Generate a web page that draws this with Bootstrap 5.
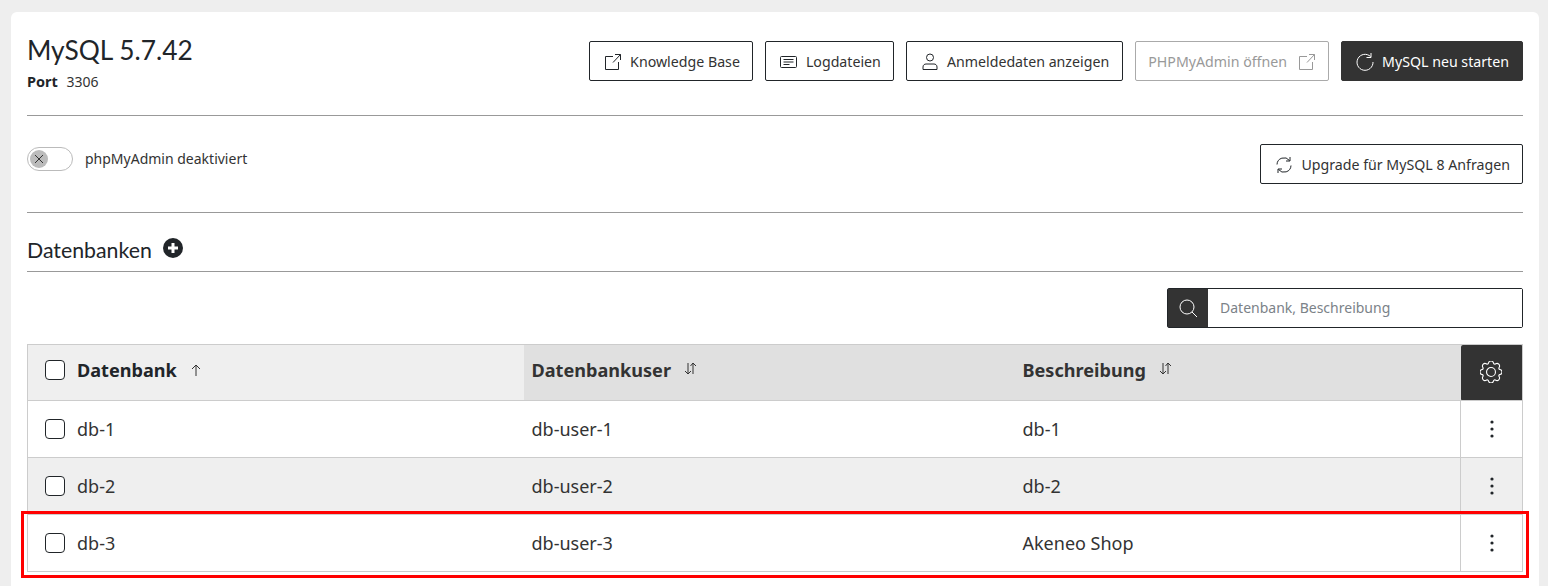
<!DOCTYPE html>
<html lang="de">
<head>
<meta charset="utf-8">
<title>MySQL</title>
<link href="https://cdn.jsdelivr.net/npm/bootstrap@5.3.0/dist/css/bootstrap.min.css" rel="stylesheet">
<style>
html,body{height:586px;overflow:hidden}
body{background:#eee;font-family:"Noto Sans",sans-serif;color:#212529;font-size:14px}
.panel-box{position:relative;margin:12px 9px 0 11px;background:#fff;border-radius:6px;padding:16px;height:700px}
.title-main{font-family:Lato,sans-serif;font-size:26.3px;font-weight:400;line-height:32px;margin:6px 0 0;color:#212529}
.port-line{font-size:14px;line-height:20px;margin-top:5px;color:#333}
.port-line b{margin-right:5px;font-size:14.5px;color:#212529}
.head-row{height:88px;border-bottom:1px solid #999}
.tool-btn{height:40px;border:1px solid #212529;border-radius:2px;background:#fff;color:#333;font-size:14.2px;padding:1px 12px 0 14px;display:flex;align-items:center;gap:8px;white-space:nowrap}
.tool-btn svg{flex:none}
.tool-btn.off{border-color:#aaa;color:#999;padding:1px 12px 0;gap:11px}
.tool-btn.dark{background:#333;border-color:#333;color:#fff;padding-right:13px}
.tool-btn.wide-pad{padding-right:13px}
.head-tools{gap:12px;padding-top:13px}
.switch-row{height:97px;border-bottom:1px solid #999}
.switch-wrap{padding-top:31px}
.upgrade-wrap{padding-top:28px}
.fake-switch{width:46px;height:24px;border:1px solid #bbb;border-radius:12px;display:flex;align-items:center;padding-left:2px}
.fake-thumb{width:18px;height:18px;border-radius:50%;background:#bbb;display:flex;align-items:center;justify-content:center}
.switch-label{font-size:14px;margin:1px 0 0 12px;color:#333}
.sec-title{font-family:Lato,sans-serif;font-weight:400;font-size:21.3px;line-height:28px;margin:0}
.sec-row{height:59px;border-bottom:1px solid #999;padding-bottom:7px;gap:11px}
.sec-plus{margin-bottom:6px}
.find-box{width:356px;height:40px;border:1px solid #212529;border-radius:2px;margin:16px 0 16px auto}
.find-icon{width:40px;background:#333;display:flex;align-items:center;justify-content:center}
.find-box input{border:0;outline:0;flex:1;padding:0 12px 2px;font-size:14px;font-family:"Noto Sans",sans-serif;color:#6c757d;min-width:0}
.find-box input::placeholder{color:#7b8288}
.data-grid{table-layout:fixed;width:1495px;margin:0;border-collapse:collapse;border:1px solid #ccc;font-size:18px}
.data-grid th,.data-grid td{padding:0;vertical-align:middle;border:0;color:#333}
.data-grid thead tr{height:56px;background:#e0e0e0}
.data-grid thead tr,.data-grid tbody tr{border-bottom:1px solid #ccc}
.data-grid tbody tr{height:57px}
.data-grid th{font-weight:700;font-size:18.1px;color:#333;padding-bottom:4px}
.data-grid th.sorted{background:#efefef;color:#212529}
.data-grid tr.alt-row td{background:#efefef}
.data-grid .cell-name{padding-left:17px}
.data-grid .cell-name>div{display:flex;align-items:center;gap:12px}
.data-grid .cell-user{padding-left:8px}
.data-grid .cell-desc{padding-left:7px}
.data-grid .cell-act{border-left:1px solid #ccc;text-align:center}
.data-grid th.cell-act{background:#333;border-radius:2px;border-left:0;padding-bottom:3px}
.kebab-ico{display:block;margin:0 auto}
.tick-box{width:20px;height:20px;border:1px solid #212529;border-radius:4px;background:#fff;margin:0;flex:none;appearance:none;display:block}
.sort-ico{margin-left:1px;vertical-align:2px}
.sort-gap{margin-left:13px}
.note-frame{position:absolute;left:10px;top:499px;width:1508px;height:67px;border:3px solid #f00;pointer-events:none}
</style>
</head>
<body>
<div class="panel-box">
  <div class="d-flex justify-content-between head-row">
    <div>
      <h1 class="title-main">MySQL 5.7.42</h1>
      <div class="port-line"><b>Port</b> 3306</div>
    </div>
    <div class="d-flex head-tools align-items-start">
      <button class="tool-btn" type="button">
        <svg width="18" height="18" viewBox="0 0 18 18" fill="none" stroke="#212529" stroke-width="1"><path d="M9 3.500H1.500v13h13V9M9 9.500 16.500 1.500M11 1.500h5.500V7"/></svg>Knowledge Base</button>
      <button class="tool-btn" type="button">
        <svg width="18" height="14" viewBox="0 0 18 14" fill="none" stroke="#212529"><rect x=".5" y="1.5" width="16" height="11" rx="1"/><path d="M3.500 4.500h10M3.500 7h10M3.500 9.500h6"/></svg>Logdateien</button>
      <button class="tool-btn wide-pad" type="button">
        <svg width="18" height="18" viewBox="0 0 18 18" fill="none" stroke="#212529"><circle cx="9" cy="4.500" r="3.500"/><path d="M2 16.500v-2.500c0-2 1.500-3 3-3h8c1.500 0 3 1 3 3v2.500z"/></svg>Anmeldedaten anzeigen</button>
      <button class="tool-btn off" type="button">PHPMyAdmin öffnen
        <svg width="18" height="18" viewBox="0 0 18 18" fill="none" stroke="#999" stroke-width="1"><path d="M9 3.500H1.500v13h13V9M9 9.500 16.500 1.500M11 1.500h5.500V7"/></svg></button>
      <button class="tool-btn dark" type="button">
        <svg width="18" height="18" viewBox="0 0 18 18" fill="none" stroke="#fff"><path d="M14.500 3.500A8 8 0 1 0 17 9"/><path d="M10.500 4.500h4.500V0"/></svg>MySQL neu starten</button>
    </div>
  </div>
  <div class="d-flex justify-content-between switch-row">
    <div class="d-flex align-items-start switch-wrap">
      <div class="fake-switch"><div class="fake-thumb"><svg width="10" height="10" viewBox="0 0 10 10" stroke="#333" fill="none"><path d="M1 1l8 8M9 1l-8 8"/></svg></div></div>
      <span class="switch-label">phpMyAdmin deaktiviert</span>
    </div>
    <div class="upgrade-wrap">
      <button class="tool-btn" type="button">
        <svg width="18" height="18" viewBox="0 0 18 18" fill="none" stroke="#212529"><path d="M2 8.500A7 7 0 0 1 14.500 4.500M16 9.500A7 7 0 0 1 3.500 13.500"/><path d="M11 5h4V1M7 13H3v4"/></svg>Upgrade für MySQL 8 Anfragen</button>
    </div>
  </div>
  <div class="d-flex align-items-end sec-row">
    <h2 class="sec-title">Datenbanken</h2>
    <svg class="sec-plus" width="20" height="20" viewBox="0 0 20 20"><circle cx="10" cy="10" r="10" fill="#212529"/><path d="M10 5v10M5 10h10" stroke="#fff" stroke-width="3"/></svg>
  </div>
  <div class="d-flex find-box">
    <span class="find-icon"><svg width="20" height="20" viewBox="0 0 20 20" fill="none" stroke="#fff"><circle cx="9" cy="9" r="7"/><path d="M14 14l5 5"/></svg></span>
    <input type="text" placeholder="Datenbank, Beschreibung">
  </div>
  <table class="table data-grid">
    <colgroup><col style="width:496px"><col style="width:492px"><col style="width:445px"><col style="width:62px"></colgroup>
    <thead><tr>
      <th class="cell-name sorted"><div><input class="tick-box" type="checkbox"><span>Datenbank</span>
        <svg class="sort-ico" width="12" height="12" viewBox="0 0 12 12" fill="none" stroke="#333"><path d="M6 12V1M2 5l4-4 4 4"/></svg></div></th>
      <th class="cell-user">Datenbankuser<svg class="sort-ico sort-gap" width="13" height="13" viewBox="0 0 13 13" fill="none" stroke="#333"><path d="M4 1v11M1 9l3 3 3-3M9 12V1M6.500 4 9 1l3 3"/></svg></th>
      <th class="cell-desc">Beschreibung<svg class="sort-ico sort-gap" width="13" height="13" viewBox="0 0 13 13" fill="none" stroke="#333"><path d="M4 1v11M1 9l3 3 3-3M9 12V1M6.500 4 9 1l3 3"/></svg></th>
      <th class="cell-act"><svg width="22" height="22" viewBox="0 0 16 16" fill="none" stroke="#fff" stroke-width=".8"><path d="M8 4.754a3.246 3.246 0 1 0 0 6.492 3.246 3.246 0 0 0 0-6.492z"/><path d="M9.796 1.343c-.527-1.790-3.065-1.790-3.592 0l-.094.319a.873.873 0 0 1-1.255.52l-.292-.16c-1.640-.892-3.433.902-2.540 2.541l.159.292a.873.873 0 0 1-.52 1.255l-.319.094c-1.790.527-1.790 3.065 0 3.592l.319.094a.873.873 0 0 1 .52 1.255l-.16.292c-.892 1.640.901 3.434 2.541 2.540l.292-.159a.873.873 0 0 1 1.255.52l.094.319c.527 1.790 3.065 1.790 3.592 0l.094-.319a.873.873 0 0 1 1.255-.52l.292.16c1.640.893 3.434-.902 2.540-2.541l-.159-.292a.873.873 0 0 1 .52-1.255l.319-.094c1.790-.527 1.790-3.065 0-3.592l-.319-.094a.873.873 0 0 1-.52-1.255l.16-.292c.893-1.640-.902-3.433-2.541-2.540l-.292.159a.873.873 0 0 1-1.255-.52l-.094-.319z"/></svg></th>
    </tr></thead>
    <tbody>
      <tr><td class="cell-name"><div><input class="tick-box" type="checkbox"><span>db-1</span></div></td><td class="cell-user">db-user-1</td><td class="cell-desc">db-1</td>
        <td class="cell-act"><svg class="kebab-ico" width="4" height="18" viewBox="0 0 4 18" fill="#212529"><circle cx="2" cy="2" r="1.600"/><circle cx="2" cy="9" r="1.600"/><circle cx="2" cy="16" r="1.600"/></svg></td></tr>
      <tr class="alt-row"><td class="cell-name"><div><input class="tick-box" type="checkbox"><span>db-2</span></div></td><td class="cell-user">db-user-2</td><td class="cell-desc">db-2</td>
        <td class="cell-act"><svg class="kebab-ico" width="4" height="18" viewBox="0 0 4 18" fill="#212529"><circle cx="2" cy="2" r="1.600"/><circle cx="2" cy="9" r="1.600"/><circle cx="2" cy="16" r="1.600"/></svg></td></tr>
      <tr><td class="cell-name"><div><input class="tick-box" type="checkbox"><span>db-3</span></div></td><td class="cell-user">db-user-3</td><td class="cell-desc">Akeneo Shop</td>
        <td class="cell-act"><svg class="kebab-ico" width="4" height="18" viewBox="0 0 4 18" fill="#212529"><circle cx="2" cy="2" r="1.600"/><circle cx="2" cy="9" r="1.600"/><circle cx="2" cy="16" r="1.600"/></svg></td></tr>
    </tbody>
  </table>
  <div class="note-frame"></div>
</div>
<script src="https://cdn.jsdelivr.net/npm/bootstrap@5.3.0/dist/js/bootstrap.bundle.min.js"></script>
</body>
</html>
